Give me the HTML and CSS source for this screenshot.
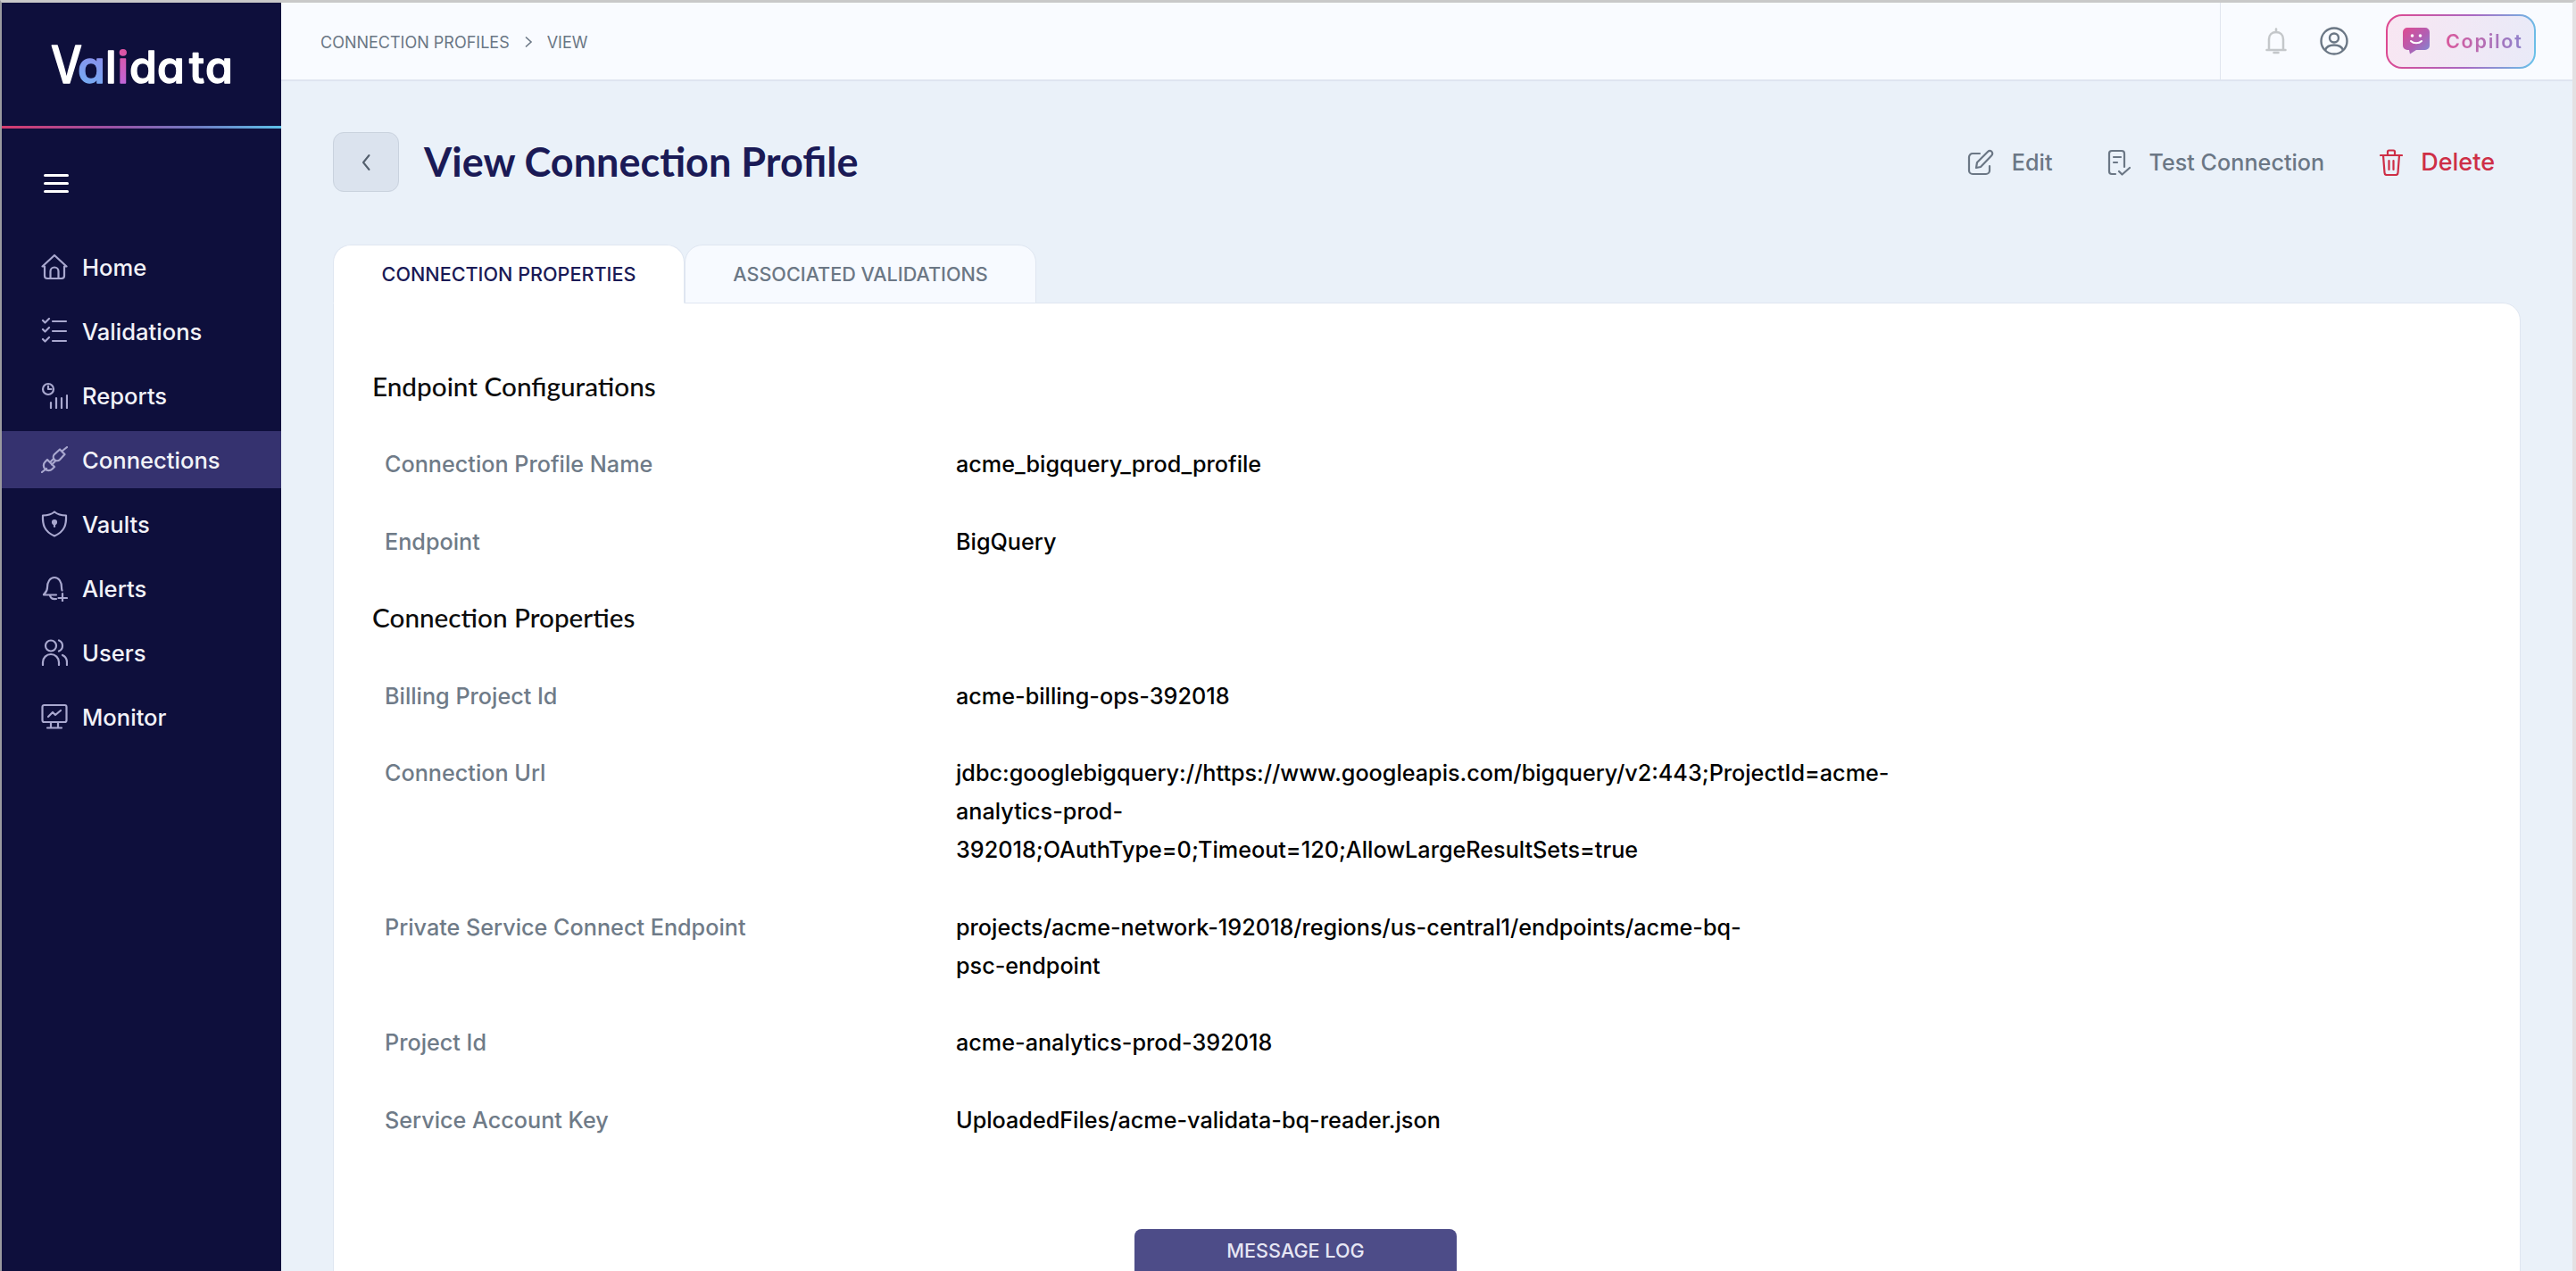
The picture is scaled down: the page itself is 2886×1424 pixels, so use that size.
FILE: index.html
```html
<!DOCTYPE html>
<html lang="en">
<head>
<meta charset="utf-8">
<title>View Connection Profile</title>
<link rel="stylesheet" href="styles.css">
</head>
<body>
<div class="app">
  <aside class="sidebar">
    <div class="brand">
      <svg class="logo" viewBox="0 0 206 60" width="206" height="60" aria-label="Validata">
        <defs>
          <linearGradient id="lgA" x1="0" y1="1" x2="1" y2="0"><stop offset="0" stop-color="#6db4f5"/><stop offset="1" stop-color="#b25fe0"/></linearGradient>
          <linearGradient id="lgI" x1="0" y1="1" x2="0" y2="0"><stop offset="0" stop-color="#b76ae8"/><stop offset="1" stop-color="#e64f92"/></linearGradient>
        </defs>
        <text class="logo-text lw lv" transform="translate(1 49) scale(.85 1)">V</text>
        <text class="logo-text" y="49"><tspan class="la" x="31">a</tspan><tspan class="lw" x="62">l</tspan><tspan class="li" x="75.500">i</tspan><tspan class="lw" x="89">d</tspan><tspan class="lw" x="120">a</tspan><tspan class="lw" x="156">t</tspan><tspan class="lw" x="174">a</tspan></text>
      </svg>
    </div>
    <button class="burger" type="button" aria-label="Menu"><span></span><span></span><span></span></button>
    <nav class="nav">
      <a class="nav-item"><svg class="nav-icon" viewBox="0 0 30 30"><path d="M1.500 14.500 15 2l13.500 12.500h-2.500V25a3 3 0 0 1-3 3H7a3 3 0 0 1-3-3V14.500z"/><path d="M10.500 28v-8a4.500 4.500 0 0 1 9 0v8"/></svg>Home</a>
      <a class="nav-item"><svg class="nav-icon" viewBox="0 0 30 30"><path d="M2 3l2.500 2.500 4.500-4.500M2 13l2.500 2.500 4.500-4.500M2 24l2.500 2.500 4.500-4.500M13 4h15M13 15h15M13 26h15"/></svg>Validations</a>
      <a class="nav-item"><svg class="nav-icon" viewBox="0 0 30 30"><circle cx="8" cy="8" r="6"/><path d="M8 4.500V8h3.500M11 29v-6M17 29V18M23 29v-11M29 29V15"/></svg>Reports</a>
      <a class="nav-item active"><svg class="nav-icon" viewBox="0 0 30 30"><path d="M1 29l5-4M7 15l8 8-2.500 2.500a5.500 5.500 0 0 1-8-8zM10 18l3.500-3.500M12 20.500l3.500-3.500M15 9l6-5.500 5.500 5.500-5.500 6a4 4 0 0 1-6-6zM24 5l5-4"/></svg>Connections</a>
      <a class="nav-item"><svg class="nav-icon" viewBox="0 0 30 30"><path d="M15 1.500c3 2.500 8 4 13 4 .5 10-1.500 18-13 23C3.500 23.500 1.500 15.500 2 5.500c5 0 10-1.500 13-4z"/><circle class="fill" cx="15" cy="13" r="2"/><path d="M15 13v5"/></svg>Vaults</a>
      <a class="nav-item"><svg class="nav-icon" viewBox="0 0 30 30"><path d="M3 22c2-2 4-3 4-8 0-6 3-11 8-11s8 5 8 11c0 1.500.2 2.500.5 3.500M3 22.500h14M10 23c.5 3 3 4.500 7 4M24 21v9M19.500 26h9.500"/></svg>Alerts</a>
      <a class="nav-item"><svg class="nav-icon" viewBox="0 0 30 30"><circle cx="11" cy="7.500" r="6"/><path d="M2 29v-3a9 9 0 0 1 18 0v3M20 1.500a6.500 6.500 0 0 1 0 12M24 18c3 1.500 5 4 5 8v3"/></svg>Users</a>
      <a class="nav-item"><svg class="nav-icon" viewBox="0 0 30 30"><rect x="1.500" y="2" width="27" height="19" rx="2"/><path d="M8 15l5-5 3 3 6-5M11 21v6M19 21v6M7 27.500h16"/></svg>Monitor</a>
    </nav>
  </aside>

  <main class="main">
    <header class="topbar">
      <div class="crumbs"><span>CONNECTION PROFILES</span><svg class="crumb-sep" viewBox="0 0 10 14"><path d="M2 1.500 8 7l-6 5.500"/></svg><span>VIEW</span></div>
      <div class="top-tools">
        <svg class="bell" viewBox="0 0 24 30"><path d="M1.500 25h21M4 25V13c0-5 3.500-8 8-8s8 3 8 8v12"/><path d="M12 1.500V5"/><path d="M9.500 28h5"/></svg>
        <svg class="user" viewBox="0 0 32 32"><circle cx="16" cy="16" r="14.500"/><circle cx="16" cy="12.500" r="5"/><path d="M6 26c1.500-4 5-5.500 10-5.500s8.500 1.500 10 5.500"/></svg>
        <button class="copilot" type="button">
          <svg class="copilot-icon" viewBox="0 0 30 30">
            <defs><linearGradient id="cpG" x1="0" y1="0" x2="1" y2="1"><stop offset="0" stop-color="#e04a90"/><stop offset=".55" stop-color="#b15fb3"/><stop offset="1" stop-color="#7a8ed6"/></linearGradient></defs>
            <path fill="url(#cpG)" d="M5 0h20a5 5 0 0 1 5 5v15a5 5 0 0 1-5 5H15l-7 4.500-1-4.500H5a5 5 0 0 1-5-5V5a5 5 0 0 1 5-5z"/>
            <circle cx="10.500" cy="9" r="1.800" fill="#fff"/><circle cx="19.500" cy="9" r="1.800" fill="#fff"/>
            <path d="M9 15c3 3 9 3 12 0" fill="none" stroke="#fff" stroke-width="2" stroke-linecap="round"/>
          </svg>
          <span class="copilot-text">Copilot</span>
        </button>
      </div>
    </header>

    <div class="content">
      <div class="title-row">
        <button class="back" type="button" aria-label="Back"><svg viewBox="0 0 12 20"><path d="M9.500 2 3 10l6.500 8"/></svg></button>
        <h1 class="title">View Connection Profile</h1>
        <div class="actions">
          <a class="action"><svg class="act-icon" viewBox="0 0 30 30"><path d="M14 5H6a4 4 0 0 0-4 4v15a4 4 0 0 0 4 4h15a4 4 0 0 0 4-4v-5"/><path d="M10 21l1-6L23 3c1.500-1.500 3.500-1.500 4.500 0s1 3-.5 4.500L15 20z"/></svg>Edit</a>
          <a class="action"><svg class="act-icon test" viewBox="0 0 26 30"><path d="M9 28H5a3 3 0 0 1-3-3V5a3 3 0 0 1 3-3h11a3 3 0 0 1 3 3v15"/><path d="M7 9h8M7 15h4M13 25l3.500 3.500L25 21"/></svg>Test Connection</a>
          <a class="action danger"><svg class="act-icon del" viewBox="0 0 26 30"><path d="M1 7h24M9 7V3a1.500 1.500 0 0 1 1.500-1.500h5A1.500 1.500 0 0 1 17 3v4M4 7l1.500 19.500a2.500 2.500 0 0 0 2.500 2.500h10a2.500 2.500 0 0 0 2.500-2.500L22 7M10.500 13v10M15.500 13v10"/></svg>Delete</a>
        </div>
      </div>

      <div class="tabs">
        <div class="tab current">CONNECTION PROPERTIES</div>
        <div class="tab">ASSOCIATED VALIDATIONS</div>
      </div>

      <section class="card">
        <h2 class="section">Endpoint Configurations</h2>
        <div class="row"><div class="label">Connection Profile Name</div><div class="value">acme_bigquery_prod_profile</div></div>
        <div class="row"><div class="label">Endpoint</div><div class="value">BigQuery</div></div>
        <h2 class="section">Connection Properties</h2>
        <div class="row"><div class="label">Billing Project Id</div><div class="value">acme-billing-ops-392018</div></div>
        <div class="row"><div class="label">Connection Url</div><div class="value">jdbc:googlebigquery://https://www.googleapis.com/bigquery/v2:443;ProjectId=acme-<br>analytics-prod-<br>392018;OAuthType=0;Timeout=120;AllowLargeResultSets=true</div></div>
        <div class="row"><div class="label">Private Service Connect Endpoint</div><div class="value">projects/acme-network-192018/regions/us-central1/endpoints/acme-bq-<br>psc-endpoint</div></div>
        <div class="row"><div class="label">Project Id</div><div class="value">acme-analytics-prod-392018</div></div>
        <div class="row"><div class="label">Service Account Key</div><div class="value">UploadedFiles/acme-validata-bq-reader.json</div></div>
        <div class="card-foot"><button class="log-btn" type="button">MESSAGE LOG</button></div>
      </section>
    </div>
  </main>
</div>
</body>
</html>
```

FILE: styles.css
```css
* { box-sizing: border-box; }
html, body { margin: 0; padding: 0; height: 100%; }
body {
  height: 1424px;
  overflow: hidden;
  background: #e3e1e3;
  font-family: Inter, "Noto Sans", sans-serif;
}
.app {
  display: flex;
  height: 1424px;
  border-top: 3px solid #c9c9c9;
  border-left: 2px solid #9a9a9f;
  border-right: 4px solid #e3e1e3;
  overflow: hidden;
}

/* Sidebar */
.sidebar {
  flex: 0 0 313px;
  background: #0e0f3c;
  color: #fff;
}
.brand {
  box-sizing: content-box;
  height: 97px;
  padding: 41px 0 0 54px;
  border-bottom: 3px solid;
  border-image: linear-gradient(90deg, #d63a6c, #9a52a6 40%, #6f7cc4 70%, #5cc1ea) 1;
}
.logo { display: block; overflow: visible; }
.logo-text {
  font-family: Inter, sans-serif;
  font-feature-settings: "cv11" 1;
  font-size: 50px;
  font-weight: 500;
  stroke-width: 1.500px;
  stroke-linejoin: round;
}
.lv { font-size: 58px; font-weight: 500; }
.lw { fill: #fff; stroke: #fff; }
.la { fill: url(#lgA); stroke: url(#lgA); }
.li { fill: url(#lgI); stroke: url(#lgI); }
.burger {
  display: flex;
  flex-direction: column;
  gap: 6px;
  width: 28px;
  margin: 51px 0 0 47px;
  padding: 0;
  border: 0;
  background: none;
}
.burger span { display: block; height: 3px; border-radius: 2px; background: #fff; }
.nav { display: flex; flex-direction: column; margin-top: 47px; }
.nav-item {
  display: flex;
  align-items: center;
  gap: 16px;
  height: 72px;
  padding-left: 44px;
  font-size: 25.600px;
  font-weight: 450;
  color: #f2f2f8;
}
.nav-item.active { background: #35326f; height: 64px; margin: 4px 0; }
.nav-icon {
  flex: none;
  width: 30px;
  height: 30px;
  fill: none;
  stroke: #a9a8cf;
  stroke-width: 2.200;
  stroke-linecap: round;
  stroke-linejoin: round;
}
.nav-icon .fill { fill: #a9a8cf; }

/* Main */
.main { flex: 1; min-width: 0; background: #eaf1f9; }
.topbar {
  display: flex;
  align-items: stretch;
  justify-content: space-between;
  height: 88px;
  background: #f9fbff;
  border-bottom: 2px solid #dfe5f0;
}
.crumbs {
  display: flex;
  align-items: center;
  gap: 16px;
  padding: 2px 0 0 44px;
  font-size: 18px;
  color: #6b7785;
}
.crumb-sep { width: 10px; height: 14px; fill: none; stroke: #6b7785; stroke-width: 1.600; }
.top-tools {
  display: flex;
  align-items: center;
  width: 395px;
  padding-left: 50px;
  border-left: 1px solid #e0e5ee;
}
.bell { width: 24px; height: 30px; fill: none; stroke: #c4c7ca; stroke-width: 2.500; stroke-linecap: round; }
.user { width: 32px; height: 32px; margin-left: 37px; fill: none; stroke: #6b7785; stroke-width: 2.400; }
.copilot {
  display: flex;
  align-items: center;
  gap: 18px;
  width: 168px;
  height: 61px;
  margin-left: 42px;
  padding: 0 0 0 17px;
  border: 2px solid transparent;
  border-radius: 18px;
  background:
    linear-gradient(100deg, #f8e6f2, #e9eaf8) padding-box,
    linear-gradient(100deg, #e0478e, #a968c2 55%, #66c4ea) border-box;
}
.copilot-icon { flex: none; width: 30px; height: 30px; }
.copilot-text {
  font-family: Inter, sans-serif;
  font-size: 21.600px;
  font-weight: 600;
  letter-spacing: 1.700px;
  background: linear-gradient(90deg, #d9589c, #8f82cc);
  -webkit-background-clip: text;
  background-clip: text;
  color: transparent;
}

.content { padding: 57px 58px 0; }
.title-row { display: flex; align-items: center; height: 67px; }
.back {
  display: flex;
  align-items: center;
  justify-content: center;
  width: 74px;
  height: 67px;
  padding: 0;
  background: #dbe3ee;
  border: 1px solid #c9d2de;
  border-radius: 12px;
}
.back svg { width: 12px; height: 20px; fill: none; stroke: #525e6c; stroke-width: 2; stroke-linecap: round; stroke-linejoin: round; }
.title {
  margin: 0 0 0 28px;
  padding-bottom: 2px;
  font-family: Lato, sans-serif;
  font-size: 45px;
  font-weight: 700;
  color: #1a1a56;
}
.actions { display: flex; align-items: center; gap: 62px; margin-left: auto; padding-right: 29px; }
.action {
  display: flex;
  align-items: center;
  gap: 20px;
  font-size: 25.200px;
  font-weight: 450;
  color: #6b7785;
}
.action.danger { color: #ce2f47; font-size: 27px; font-weight: 500; }
.act-icon { width: 30px; height: 30px; fill: none; stroke: #6b7785; stroke-width: 2.200; stroke-linecap: round; stroke-linejoin: round; }
.act-icon.test, .act-icon.del { width: 26px; }
.act-icon.del { stroke: #ce2f47; }

.tabs { display: flex; margin-top: 59px; position: relative; z-index: 1; }
.tab {
  display: flex;
  align-items: center;
  justify-content: center;
  width: 394px;
  height: 66px;
  font-size: 21.600px;
  font-weight: 450;
  color: #6b7785;
  background: #f7faff;
  border: 1.500px solid #dfe6f1;
  border-radius: 20px 20px 0 0;
}
.tab.current { color: #1a1a56; background: #fff; border-bottom-color: #fff; }

.card {
  margin-top: -1px;
  height: 1200px;
  padding: 73px 43px 0;
  background: #fff;
  border: 1.500px solid #dfe6f1;
  border-radius: 0 20px 20px 20px;
  font-size: 25.200px;
  line-height: 43.200px;
}
.section {
  margin: -2px 0 45.200px;
  font-family: Lato, sans-serif;
  font-size: 29.700px;
  font-weight: 500;
  line-height: 43.200px;
  color: #0c0c0c;
}
.row { display: grid; grid-template-columns: 640px 1fr; margin-bottom: 43.200px; padding-left: 14px; }
.label { font-weight: 450; color: #6f7b88; }
.value { font-weight: 450; color: #000; }
.card-foot { margin-top: 100.500px; padding-left: 854px; }
.log-btn {
  display: block;
  width: 361px;
  height: 47px;
  padding: 0;
  border: 0;
  border-radius: 8px 8px 0 0;
  background: #4d4c88;
  color: #e6e6f4;
  font-family: Inter, sans-serif;
  font-size: 21.600px;
  font-weight: 450;
}
```
